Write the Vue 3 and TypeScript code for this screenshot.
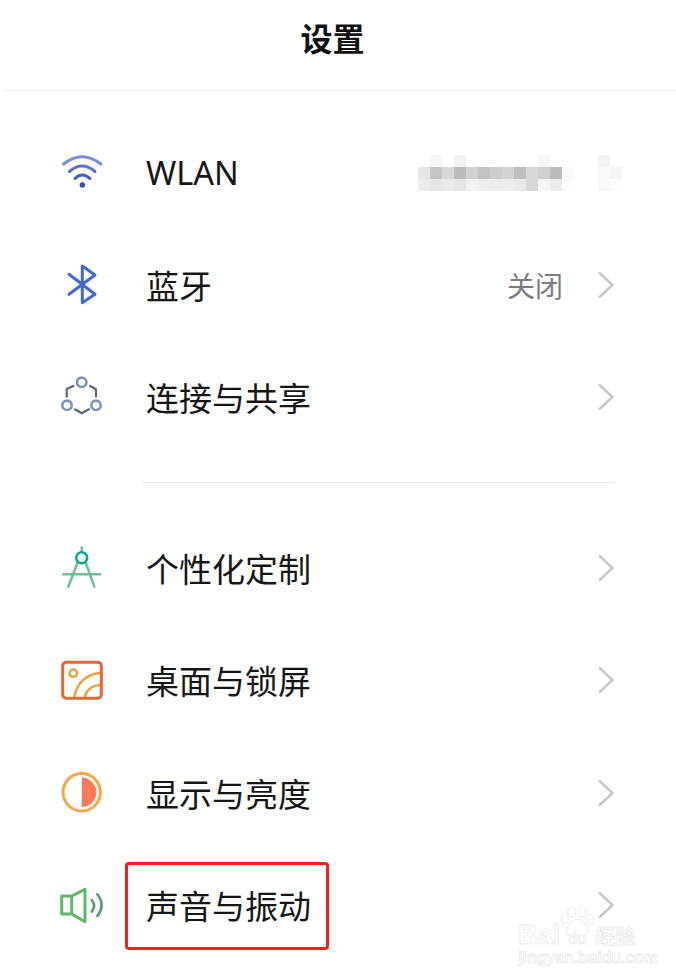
<script setup lang="ts">
const blurRows: string[][] = [
  ["", "#f6f6f6", "", "#f2f2f2", "", "", "", "", "", "", "#f6f6f6", "", "", "", "", "#f2f2f2", ""],
  ["#e6e6e6", "#c4c4c4", "#d8d8d8", "#bcbcbc", "#d2d2d2", "#c2c2c2", "#cdcdcd", "#d4d4d4", "#bebebe", "#d8d8d8", "#d0d0d0", "#bcbcbc", "#fafafa", "", "", "#f8f8f8", "#f4f4f4"],
  ["#ececec", "#e6e6e6", "#eaeaea", "#e4e4e4", "#f2f2f2", "#eeeeee", "#ececec", "#eeeeee", "#e8e8e8", "#d8d8d8", "#f4f4f4", "#ececec", "#fcfcfc", "", "", "#f8f8f8", "#fcfcfc"],
];
const blurCells = blurRows.flat();

const firstGroup = [
  { key: "wlan", label: "WLAN" },
  { key: "bt", label: "蓝牙", status: "关闭" },
  { key: "share", label: "连接与共享" },
];
const secondGroup = [
  { key: "custom", label: "个性化定制" },
  { key: "desktop", label: "桌面与锁屏" },
  { key: "display", label: "显示与亮度" },
  { key: "sound", label: "声音与振动", marked: true },
];
</script>

<template>
  <div class="page">
    <header class="top">设置</header>

    <ul class="list first">
      <li v-for="item in firstGroup" :key="item.key" class="row">
        <svg class="icon" viewBox="0 0 44 44" fill="none" stroke-linecap="round" stroke-linejoin="round">
          <template v-if="item.key === 'wlan'">
            <path d="M3.5 13Q22-1.6 41 13" stroke="#7a8cd8" stroke-width="3" />
            <path d="M9.5 20.5Q22 9.5 35 20.5" stroke="#5a70cf" stroke-width="3" />
            <path d="M15 27.5Q22 20.5 30 27.5" stroke="#4a5cc6" stroke-width="3" />
            <circle cx="22.3" cy="34" r="2.7" fill="#3f49b4" />
          </template>
          <path
            v-else-if="item.key === 'bt'"
            d="M9 10.3L35 30.3L22.3 38.7V2L35 11L9 30.3"
            stroke="#4169d0"
            stroke-width="3"
          />
          <template v-else>
            <circle cx="21.7" cy="6.3" r="4.7" stroke="#8093b5" stroke-width="2.6" />
            <circle cx="7" cy="29.3" r="4.7" stroke="#8093b5" stroke-width="2.6" />
            <circle cx="36" cy="29.3" r="4.7" stroke="#8093b5" stroke-width="2.6" />
            <path d="M13.3 10L6.7 13V20.7M30 10L36 13.3V20.7M15 33.3L21.7 37.3L29 33.3" stroke="#5c6675" stroke-width="2.2" />
          </template>
        </svg>
        <span class="label" :class="{ latin: item.key === 'wlan' }">{{ item.label }}</span>
        <div v-if="item.key === 'wlan'" class="blur">
          <i v-for="(c, i) in blurCells" :key="i" :style="{ background: c || 'transparent' }"></i>
        </div>
        <template v-else>
          <span v-if="item.status" class="status">{{ item.status }}</span>
          <svg class="chev" viewBox="0 0 18 30" fill="none">
            <path d="M2 2.5L15.5 15L2 27.5" stroke="#c8c8c8" stroke-width="2.4" />
          </svg>
        </template>
      </li>
    </ul>

    <div class="divider"></div>

    <ul class="list">
      <li v-for="item in secondGroup" :key="item.key" class="row">
        <svg class="icon" viewBox="0 0 44 44" fill="none" stroke-linecap="round" stroke-linejoin="round">
          <template v-if="item.key === 'custom'">
            <path d="M17.3 16.3L8.3 39.7M26 16.3L34.3 39.7M3.3 27.3H40" stroke="#6cc190" stroke-width="2.5" />
            <path d="M21.7 .5V4" stroke="#6cc190" stroke-width="2.5" />
            <circle cx="21.7" cy="10.7" r="5.5" stroke="#0aa893" stroke-width="2.6" />
          </template>
          <template v-else-if="item.key === 'desktop'">
            <path d="M14.5 37Q19 17 39 14M25 37Q28 27 39 26" stroke="#f2a33a" stroke-width="2.6" />
            <circle cx="13.3" cy="14.3" r="3.7" stroke="#f2a33a" stroke-width="2.5" />
            <rect x="2.7" y="3.3" width="38.6" height="36" rx="3.5" stroke="#e4663a" stroke-width="3" />
          </template>
          <template v-else-if="item.key === 'display'">
            <circle cx="21.7" cy="20.3" r="18.7" stroke="#f2a84a" stroke-width="3" />
            <path d="M21.7 5.6A14.7 14.7 0 0 1 21.7 35Z" fill="#fb7a58" />
          </template>
          <template v-else>
            <path d="M11.7 12L25 5.3V37.7L11.7 30H1.7V12ZM11.7 12V30" stroke="#62b56c" stroke-width="3" />
            <path d="M31.7 16Q36.5 22 31.7 27.7M37.3 10.3Q46 21 37.3 32" stroke="#5a9a75" stroke-width="2.6" />
          </template>
        </svg>
        <span class="label">
          {{ item.label }}
          <span v-if="item.marked" class="mark"></span>
        </span>
        <svg class="chev" viewBox="0 0 18 30" fill="none">
          <path d="M2 2.5L15.5 15L2 27.5" stroke="#c8c8c8" stroke-width="2.4" />
        </svg>
      </li>
    </ul>

    <div class="watermark">
      <svg class="paw" viewBox="0 0 40 36" fill="#fff" stroke="#ececec" stroke-width="1.3">
        <ellipse cx="13" cy="8" rx="4.5" ry="6" />
        <ellipse cx="25" cy="8" rx="4.5" ry="6" />
        <ellipse cx="5" cy="16" rx="4" ry="5.5" />
        <ellipse cx="34" cy="16" rx="4" ry="5.5" />
        <path d="M19 16C13 16 7 24 7 29C7 34 13 35 19 33C25 35 32 34 32 29C32 24 25 16 19 16Z" />
      </svg>
      <div class="wm-brand"><span>Bai</span><span class="wm-du">du</span><span class="wm-cn">经验</span></div>
      <div class="wm-url">jingyan.baidu.com</div>
    </div>
  </div>
</template>

<style scoped>
.page {
  position: relative;
  width: 676px;
  height: 980px;
  overflow: hidden;
  background: #fff;
  color: #161616;
  font-family: "Liberation Sans", "Noto Sans CJK SC", sans-serif;
}

.top {
  height: 74px;
  margin-left: 2px;
  border-bottom: 1px solid #f0f0f0;
  padding: 0 13px 16px 0;
  display: flex;
  align-items: center;
  justify-content: center;
  font-size: 32px;
  font-weight: 700;
  color: #111;
}

.list {
  list-style: none;
  margin: 0;
  padding: 0;
}

.first {
  margin-top: 26px;
}

.row {
  height: 112.5px;
  display: flex;
  align-items: center;
  padding: 0 61px 0 60px;
}

.icon {
  width: 44px;
  height: 44px;
  flex: none;
  overflow: visible;
}

.label {
  position: relative;
  margin: -2px 0 0 42px;
  font-size: 33px;
  white-space: nowrap;
}

.latin {
  font-family: "Noto Sans", sans-serif;
  font-size: 32.5px;
}

.mark {
  position: absolute;
  left: -21px;
  right: -18px;
  top: -19px;
  bottom: -21px;
  border: 3px solid #f5201a;
  border-radius: 4px;
}

.status {
  margin: -2px 34px 0 auto;
  font-size: 28px;
  color: #7c7c7c;
}

.chev {
  width: 18px;
  height: 30px;
  flex: none;
  margin-top: -2px;
}

.label + .chev {
  margin-left: auto;
}

.blur {
  margin-left: auto;
  margin-right: -7px;
  display: grid;
  grid-template-columns: repeat(17, 12px);
  grid-auto-rows: 12px;
  filter: blur(0.5px);
}

.divider {
  height: 1px;
  margin: 27px 62px 30px 142px;
  background: #e4e4e4;
}

.watermark {
  position: absolute;
  left: 516px;
  top: 905px;
  width: 130px;
  height: 65px;
  color: #fff;
  -webkit-text-stroke: 1px #ececec;
}

.paw {
  position: absolute;
  left: 44px;
  top: 0;
  width: 36px;
  height: 32px;
}

.wm-brand {
  position: absolute;
  left: 2px;
  top: 15px;
  display: flex;
  align-items: baseline;
  font-size: 27px;
  font-weight: 700;
  white-space: nowrap;
}

.wm-du {
  margin-left: 8px;
  font-size: 15px;
}

.wm-cn {
  margin-left: 9px;
  font-size: 20px;
}

.wm-url {
  position: absolute;
  left: 2px;
  top: 44px;
  font-size: 16px;
  font-weight: 700;
  white-space: nowrap;
}
</style>
